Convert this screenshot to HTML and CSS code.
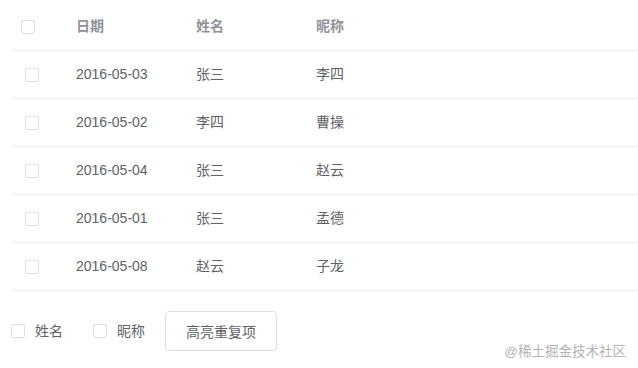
FILE: index.html
```
<!doctype html>
<html>
  <head>
    <meta charset="utf-8">
    <title>高亮重复项</title>
    <link rel="stylesheet" href="styles.css">
  </head>

  <body>
    <main class="page">
      <!-- Table -->
      <table class="grid">
        <colgroup>
          <col class="col-check">
          <col class="col-date">
          <col class="col-name">
          <col>
        </colgroup>
        <thead>
          <tr>
            <th class="cell-check head-check"><span class="box"></span></th>
            <th>日期</th>
            <th>姓名</th>
            <th>昵称</th>
          </tr>
        </thead>
        <tbody>
          <tr>
            <td class="cell-check"><span class="box"></span></td>
            <td>2016-05-03</td>
            <td>张三</td>
            <td>李四</td>
          </tr>
          <tr>
            <td class="cell-check"><span class="box"></span></td>
            <td>2016-05-02</td>
            <td>李四</td>
            <td>曹操</td>
          </tr>
          <tr>
            <td class="cell-check"><span class="box"></span></td>
            <td>2016-05-04</td>
            <td>张三</td>
            <td>赵云</td>
          </tr>
          <tr>
            <td class="cell-check"><span class="box"></span></td>
            <td>2016-05-01</td>
            <td>张三</td>
            <td>孟德</td>
          </tr>
          <tr>
            <td class="cell-check"><span class="box"></span></td>
            <td>2016-05-08</td>
            <td>赵云</td>
            <td>子龙</td>
          </tr>
        </tbody>
      </table>

      <!-- Controls -->
      <div class="toolbar">
        <label class="check"><span class="box"></span>姓名</label>
        <label class="check"><span class="box"></span>昵称</label>
        <button class="btn" type="button">高亮重复项</button>
      </div>
    </main>

    <div class="watermark">@稀土掘金技术社区</div>
  </body>
</html>
```

FILE: styles.css
```
body {
  margin: 0;
  font-family: "Liberation Sans", "Noto Sans CJK SC", sans-serif;
  font-size: 14px;
  color: #606266;
  background: #fff;
}

.page {
  padding: 2px 0 0 12px;
}

.grid {
  width: 626px;
  table-layout: fixed;
  border-collapse: collapse;
}

.col-check {
  width: 54px;
}

.col-date,
.col-name {
  width: 120px;
}

th,
td {
  padding: 0 10px;
  text-align: left;
  border-bottom: 1px solid #ebeef5;
  line-height: 23px;
}

th {
  height: 48px;
  color: #909399;
  font-weight: bold;
}

td {
  height: 47px;
}

.cell-check {
  padding: 0 0 0 13px;
}

.head-check {
  padding-left: 9px;
}

.box {
  display: inline-block;
  width: 12px;
  height: 12px;
  border: 1px solid #dcdfe6;
  border-radius: 2px;
  background: #fff;
  vertical-align: middle;
}

.toolbar {
  display: flex;
  align-items: center;
  margin-top: 20px;
  margin-left: -1px;
}

.check {
  display: flex;
  align-items: center;
  gap: 10px;
  margin-right: 30px;
  line-height: 20px;
}

.check + .check {
  margin-right: 20px;
}

.btn {
  height: 40px;
  padding: 0 20px;
  font-family: inherit;
  font-size: 14px;
  color: #606266;
  background: #fff;
  border: 1px solid #dcdfe6;
  border-radius: 4px;
}

.watermark {
  position: absolute;
  right: 12px;
  top: 340px;
  font-size: 13.5px;
  color: #b3b3b3;
}
```
